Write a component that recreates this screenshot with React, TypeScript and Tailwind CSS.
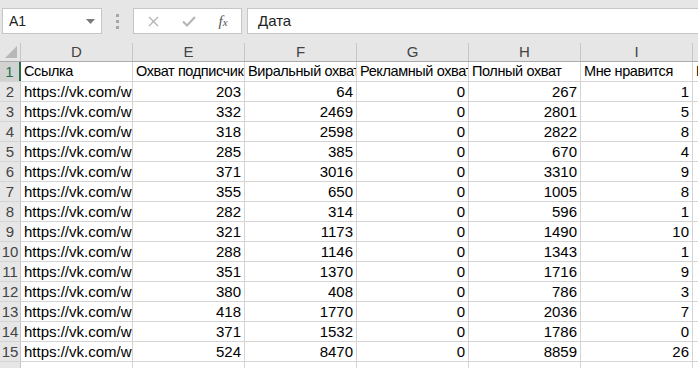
import React from "react";

const cols = ["D", "E", "F", "G", "H", "I"];

const headerRow = ["Ссылка", "Охват подписчиков", "Виральный охват", "Рекламный охват", "Полный охват", "Мне нравится"];

const rows: number[][] = [
	[203, 64, 0, 267, 1],
	[332, 2469, 0, 2801, 5],
	[318, 2598, 0, 2822, 8],
	[285, 385, 0, 670, 4],
	[371, 3016, 0, 3310, 9],
	[355, 650, 0, 1005, 8],
	[282, 314, 0, 596, 1],
	[321, 1173, 0, 1490, 10],
	[288, 1146, 0, 1343, 1],
	[351, 1370, 0, 1716, 9],
	[380, 408, 0, 786, 3],
	[418, 1770, 0, 2036, 7],
	[371, 1532, 0, 1786, 0],
	[524, 8470, 0, 8859, 26],
];

function FormulaBar() {
	return (
		<div className="h-[43px] bg-[#e6e6e6] flex items-start pt-2 pl-[2px] shrink-0">
			{/* Name box */}
			<div className="w-[100px] h-[26px] bg-white border border-[#c6c6c6] flex items-center justify-between pl-[6px] pr-[6px] text-[14px] text-[#222]">
				<span>A1</span>
				<svg width="9" height="5" viewBox="0 0 9 5">
					<path d="M0 0 L9 0 L4.5 5 Z" fill="#7a7a7a" />
				</svg>
			</div>
			<div className="w-[31px] h-[26px] flex flex-col items-center justify-center gap-[3px]">
				<span className="w-[3px] h-[3px] bg-[#a6a6a6]" />
				<span className="w-[3px] h-[3px] bg-[#a6a6a6]" />
				<span className="w-[3px] h-[3px] bg-[#a6a6a6]" />
			</div>
			{/* Buttons */}
			<div className="w-[109px] h-[26px] bg-white border border-[#c6c6c6] flex items-center">
				<div className="w-[38px] flex justify-center">
					<svg width="11" height="11" viewBox="0 0 11 11">
						<path d="M1 1 L10 10 M10 1 L1 10" stroke="#b4b4b4" strokeWidth="1.4" />
					</svg>
				</div>
				<div className="w-[34px] flex justify-center">
					<svg width="14" height="11" viewBox="0 0 14 11">
						<path d="M1 5.5 L5 9.5 L13 1" stroke="#b4b4b4" strokeWidth="2" fill="none" />
					</svg>
				</div>
				<div className="w-[34px] flex justify-center">
					<span className="font-['Liberation_Serif',serif] italic text-[15px] text-[#555] leading-none">
						f<span className="text-[11px]">x</span>
					</span>
				</div>
			</div>
			<div className="ml-[5px] flex-1 h-[26px] bg-white border border-[#c6c6c6] border-r-0 flex items-center pl-[10px] text-[15px] text-[#222]">
				Дата
			</div>
		</div>
	);
}

function ColumnHeaders() {
	return (
		<div className="flex h-[19px] shrink-0 bg-[#e6e6e6] border-b border-[#ababab]">
			<div className="w-[21px] shrink-0 border-r border-[#c6c6c6] relative">
				<svg className="absolute right-[3px] bottom-[3px]" width="12" height="12" viewBox="0 0 12 12">
					<path d="M12 0 L12 12 L0 12 Z" fill="#b8b8b8" />
				</svg>
			</div>
			{cols.map((c) => (
				<div key={c} className="w-[112px] shrink-0 border-r border-[#c6c6c6] flex items-center justify-center text-[15px] text-[#444]">
					{c}
				</div>
			))}
			<div className="flex-1" />
		</div>
	);
}

function RowHeader({ n, active, hidden }: { n: number; active?: boolean; hidden?: boolean }) {
	return (
		<div
			className={`w-[21px] shrink-0 flex justify-center text-[15px] leading-[19px] overflow-hidden ${hidden ? "pt-[8px]" : ""} ${
				active ? "bg-[#d2d2d2] text-[#217346] border-r-2 border-[#217346]" : "bg-[#e6e6e6] text-[#444] border-r border-[#c6c6c6]"
			}`}
		>
			{n}
		</div>
	);
}

export default function App() {
	return (
		<div className="w-[698px] h-[368px] overflow-hidden bg-white flex flex-col font-['Liberation_Sans',Arial,sans-serif]">
			<FormulaBar />
			<ColumnHeaders />
			{/* Row 1 */}
			<div className="flex h-[20px] shrink-0 border-b border-[#d4d4d4]">
				<RowHeader n={1} active />
				{headerRow.map((t, i) => (
					<div key={i} className="w-[112px] shrink-0 border-r border-[#d4d4d4] overflow-hidden whitespace-nowrap pl-[3px] text-[14.5px] tracking-[-0.4px] leading-[19px] text-black">
						{t}
					</div>
				))}
				<div className="flex-1 overflow-hidden whitespace-nowrap pl-[3px] text-[14.5px] leading-[19px] text-black">Поделились</div>
			</div>
			{rows.map((r, idx) => (
				<div key={idx} className="flex h-[20px] shrink-0 border-b border-[#d4d4d4]">
					<RowHeader n={idx + 2} />
					<div className="w-[112px] shrink-0 border-r border-[#d4d4d4] overflow-hidden whitespace-nowrap pl-[3px] text-[15px] leading-[19px] text-black">
						https://vk.com/wall-12345678_9
					</div>
					{r.map((v, i) => (
						<div key={i} className="w-[112px] shrink-0 border-r border-[#d4d4d4] text-right pr-[3px] text-[15px] leading-[19px] text-black">
							{v}
						</div>
					))}
					<div className="flex-1" />
				</div>
			))}
			<div className="flex h-[20px] shrink-0">
				<RowHeader n={16} hidden />
				{cols.map((c) => (
					<div key={c} className="w-[112px] shrink-0 border-r border-[#d4d4d4]" />
				))}
			</div>
		</div>
	);
}
